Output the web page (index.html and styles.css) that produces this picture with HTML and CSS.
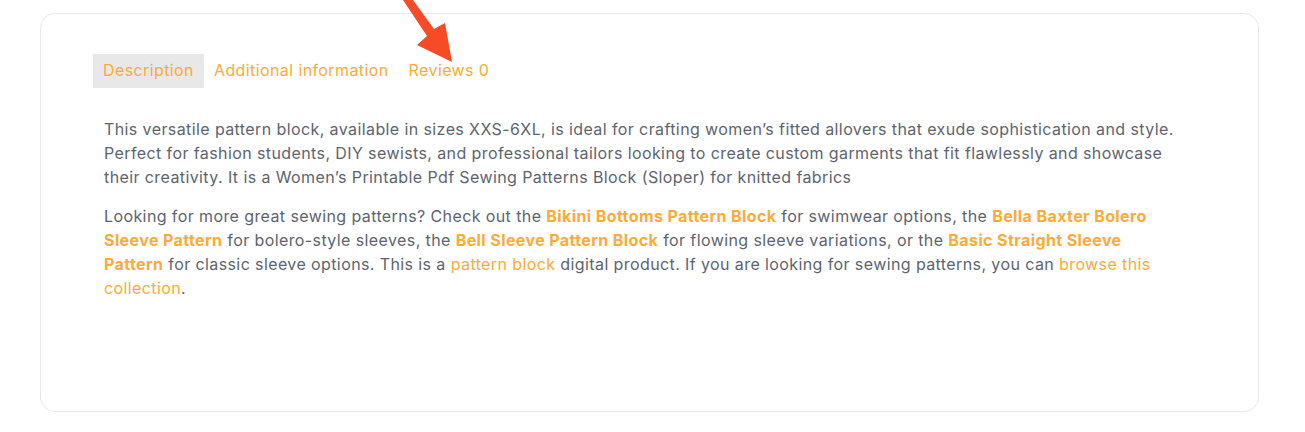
FILE: index.html
```html
<!DOCTYPE html>
<html lang="en">
<head>
    <meta charset="UTF-8">
    <meta name="viewport" content="width=device-width, initial-scale=1.0">
    <title>Product tabs</title>
    <link rel="stylesheet" href="styles.css">
</head>
<body>
    <section class="product-tabs">
        <nav class="tab-list">
            <a class="tab active" href="#">Description</a>
            <a class="tab" href="#">Additional information</a>
            <a class="tab" href="#">Reviews 0</a>
        </nav>

        <div class="tab-panel">
            <p>This versatile pattern block, available in sizes XXS-6XL, is ideal for crafting women’s fitted allovers that exude sophistication and style. Perfect for fashion students, DIY sewists, and professional tailors looking to create custom garments that fit flawlessly and showcase their creativity. It is a Women’s Printable Pdf Sewing Patterns Block (Sloper) for knitted fabrics</p>
            <p>Looking for more great sewing patterns? Check out the <a class="strong-link" href="#">Bikini Bottoms Pattern Block</a> for swimwear options, the <a class="strong-link" href="#">Bella Baxter Bolero Sleeve Pattern</a> for bolero-style sleeves, the <a class="strong-link" href="#">Bell Sleeve Pattern Block</a> for flowing sleeve variations, or the <a class="strong-link" href="#">Basic Straight Sleeve Pattern</a> for classic sleeve options. This is a <a href="#">pattern block</a> digital product. If you are looking for sewing patterns, you can <a href="#">browse this collection</a>.</p>
        </div>
    </section>

    <svg class="pointer-arrow" width="60" height="66" viewBox="0 0 60 66">
        <polygon points="3,0 13,0 34,29 45,23 52,62 17,45 27,36" fill="#f54b27"/>
    </svg>
</body>
</html>
```

FILE: styles.css
```css
body {
    margin: 0;
    padding: 13px 46px 20px 40px;
    font-family: Inter, "Open Sans", sans-serif;
    letter-spacing: 0.4px;
    background-color: #fff;
    color: #5d6470;
}
.product-tabs {
    border: 1px solid #e8e8e8;
    border-radius: 15px;
    padding: 40px 52px 0;
    height: 357px;
}
.tab-list {
    display: flex;
    gap: 0;
}
.tab {
    display: block;
    padding: 0 10px;
    height: 34px;
    line-height: 33px;
    font-size: 16px;
    color: #fbab38;
    text-decoration: none;
}
.tab.active {
    background-color: #e8e8e8;
}
.tab-panel {
    padding: 29px 21px 0 11px;
    font-size: 16px;
    line-height: 24px;
}
.tab-panel p {
    margin: 0 0 15px;
}
.tab-panel a {
    color: #fbab38;
    text-decoration: none;
}
.tab-panel a.strong-link {
    font-weight: 700;
}
.pointer-arrow {
    position: absolute;
    left: 400px;
    top: 0;
}
```
